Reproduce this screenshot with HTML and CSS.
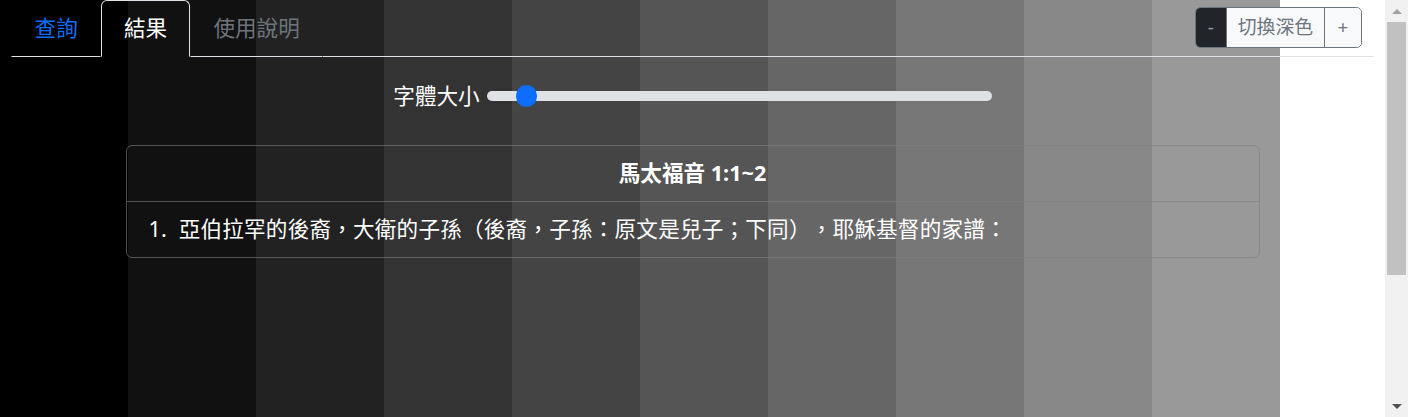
FILE: index.html
```html
<!DOCTYPE html>
<html lang="zh-Hant">
<head>
<meta charset="utf-8">
<title>結果</title>
<link rel="stylesheet" href="styles.css">
</head>
<body>
<div class="window">
<div class="page">
  <nav class="tabs">
    <a class="tab tab-link">查詢</a>
    <a class="tab tab-active">結果</a>
    <a class="tab tab-muted">使用說明</a>
    <div class="tab-fill">
      <div class="btn-group">
        <button class="btn btn-dark">-</button>
        <button class="btn btn-light">切換深色</button>
        <button class="btn btn-light">+</button>
      </div>
    </div>
  </nav>
  <div class="font-row">
    <label class="font-label" for="fs">字體大小</label>
    <input id="fs" class="range" type="range" min="0" max="100" value="6">
  </div>
  <div class="card">
    <div class="card-head">馬太福音 1:1~2</div>
    <div class="card-row">1.&nbsp; 亞伯拉罕的後裔，大衛的子孫（後裔，子孫：原文是兒子；下同），耶穌基督的家譜：</div>
  </div>
</div>
<div class="scrollbar">
  <div class="sb-btn"><span class="arrow-up"></span></div>
  <div class="sb-track"><div class="sb-thumb"></div></div>
  <div class="sb-btn"><span class="arrow-down"></span></div>
</div>
</div>
</body>
</html>
```

FILE: styles.css
```css
html, body {
  margin: 0;
  padding: 0;
  background: #fff;
  overflow: hidden;
}
body {
  font-family: "Noto Sans", "Noto Sans CJK TC", sans-serif;
  font-size: 21.6px;
  line-height: 1.5;
  color: #fff;
  text-spacing-trim: space-all;
  font-feature-settings: "chws" 0, "halt" 0;
}
.window {
  display: flex;
  height: 417px;
}
.page {
  flex: 1;
  min-width: 0;
  padding: 0 11px;
  background-color: #fff;
  background-image: linear-gradient(to right,
    #000 0 128px, #111 128px 256px, #222 256px 384px, #333 384px 512px,
    #444 512px 640px, #555 640px 768px, #666 768px 896px, #777 896px 1024px,
    #888 1024px 1152px, #999 1152px 1280px);
  background-size: 1280px 100%;
  background-repeat: no-repeat;
}
.tabs {
  display: flex;
  align-items: stretch;
  height: 57px;
}
.tab {
  display: flex;
  align-items: center;
  box-sizing: border-box;
  padding: 0 22.6px;
  border: 1px solid transparent;
  border-bottom: 1px solid #dee2e6;
  border-radius: 6px 6px 0 0;
  text-decoration: none;
  white-space: nowrap;
}
.tab-link { color: #0d6efd; }
.tab-muted { color: #6c757d; }
.tab-active {
  color: #fff;
  border-color: #dee2e6;
  border-bottom-color: transparent;
  padding: 0 21.6px;
}
.tab-fill {
  flex: 1;
  display: flex;
  justify-content: flex-end;
  align-items: flex-start;
  border-bottom: 1px solid #dee2e6;
  padding-top: 7px;
  padding-right: 12px;
}
.btn-group {
  display: flex;
  border: 1px solid #6c757d;
  border-radius: 5.4px;
  overflow: hidden;
  height: 41px;
  box-sizing: border-box;
}
.btn {
  font-family: "Noto Sans", "Noto Sans CJK TC", sans-serif;
  font-size: 18.9px;
  line-height: 1;
  padding: 0 10.8px;
  border: 0;
  margin: 0;
}
.btn + .btn { border-left: 1px solid #6c757d; }
.btn-dark {
  background: #212529;
  color: #9aa0a6;
  width: 30px;
}
.btn-light {
  background: #f8f9fa;
  color: #6c757d;
}
.btn-light:last-child { width: 37px; }
.font-row {
  display: flex;
  align-items: center;
  justify-content: center;
  gap: 7px;
  margin-top: 23px;
  height: 32px;
}
.font-label { color: #fff; }
.range {
  -webkit-appearance: none;
  appearance: none;
  width: 505px;
  height: 22px;
  margin: 0;
  padding: 0;
  background: transparent;
}
.range::-webkit-slider-runnable-track {
  height: 10.8px;
  background: #dee2e6;
  border-radius: 6px;
}
.range::-webkit-slider-thumb {
  -webkit-appearance: none;
  appearance: none;
  width: 21.6px;
  height: 21.6px;
  border-radius: 50%;
  background: #0d6efd;
  border: 0;
  margin-top: -5.4px;
}
.card {
  width: 1134px;
  box-sizing: border-box;
  margin: 33px auto 0;
  border: 1px solid rgba(128, 128, 128, 0.6);
  border-radius: 6px;
}
.card-head {
  height: 55px;
  display: flex;
  align-items: center;
  justify-content: center;
  font-weight: 700;
  border-bottom: 1px solid rgba(128, 128, 128, 0.6);
}
.card-row {
  height: 55px;
  display: flex;
  align-items: center;
  padding-left: 22px;
  color: #fff;
  letter-spacing: 0.2px;
}
.scrollbar {
  width: 23px;
  flex: none;
  display: flex;
  flex-direction: column;
  background: #f1f1f1;
}
.sb-btn {
  height: 22px;
  flex: none;
  display: flex;
  align-items: center;
  justify-content: center;
}
.arrow-up, .arrow-down {
  width: 0;
  height: 0;
  border-left: 5.5px solid transparent;
  border-right: 5.5px solid transparent;
}
.arrow-up { border-bottom: 5px solid #a3a3a3; }
.arrow-down { border-top: 5px solid #505050; }
.sb-track {
  flex: 1;
  padding: 0 2px;
}
.sb-thumb {
  height: 253px;
  background: #c1c1c1;
}
```
